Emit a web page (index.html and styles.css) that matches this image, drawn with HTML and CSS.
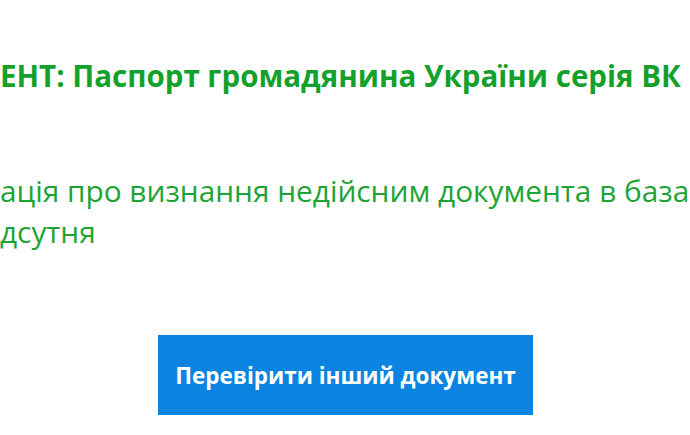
FILE: index.html
```html
<!DOCTYPE html>
<html lang="uk">
<head>
<meta charset="utf-8">
<link rel="stylesheet" href="styles.css">
</head>
<body>
<main class="result">
  <h2 class="doc-title">ЕНТ: Паспорт громадянина України серія ВК</h2>
  <p class="doc-status">ація про визнання недійсним документа в база<br>дсутня</p>
  <div class="actions">
    <a class="btn" href="#">Перевірити інший документ</a>
  </div>
</main>
</body>
</html>
```
FILE: styles.css
```css
html, body {
  margin: 0;
  padding: 0;
  background: #ffffff;
}
body {
  width: 690px;
  height: 435px;
  overflow: hidden;
  font-family: "Open Sans", "Liberation Sans", sans-serif;
}
.result {
  padding-top: 56px;
}
.doc-title {
  margin: 0;
  font-size: 29.5px;
  line-height: 40px;
  font-weight: 700;
  color: #14a12b;
  white-space: nowrap;
}
.doc-status {
  margin: 74px 0 0;
  font-size: 29.8px;
  line-height: 41px;
  font-weight: 400;
  color: #1ea434;
  white-space: nowrap;
}
.actions {
  display: flex;
  padding-left: 158px;
  margin-top: 83px;
}
.btn {
  display: flex;
  align-items: center;
  justify-content: center;
  width: 375px;
  height: 80px;
  background: #0a84e0;
  color: #ffffff;
  font-size: 22.5px;
  font-weight: 700;
  text-decoration: none;
}
```
